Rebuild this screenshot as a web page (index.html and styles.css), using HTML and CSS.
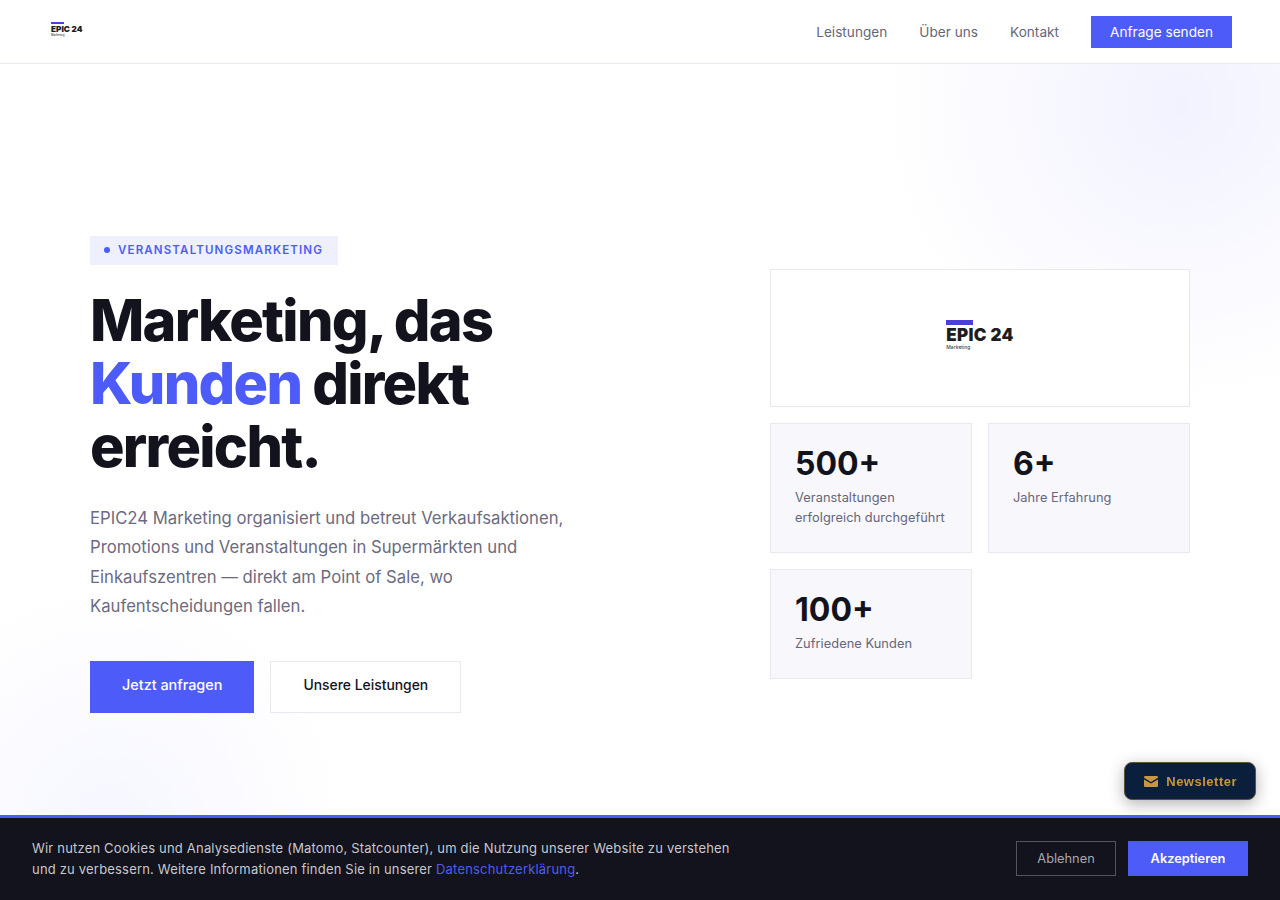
FILE: index.html
```html
<!DOCTYPE html>
<html lang="de">
<head>
    <title>EPIC24 Marketing</title>
    <link rel="stylesheet" href="styles.css">
</head>
<body>
    <header class="site-header">
        <a href="#" class="logo logo-small">
            <span class="logo-bar"></span>
            <span class="logo-name">EPIC 24</span>
            <span class="logo-sub">Marketing</span>
        </a>
        <nav class="main-nav">
            <a href="#">Leistungen</a>
            <a href="#">Über uns</a>
            <a href="#">Kontakt</a>
            <a href="#" class="nav-cta">Anfrage senden</a>
        </nav>
    </header>

    <main class="hero">
        <div class="hero-left">
            <div class="hero-tag"><span class="tag-dot"></span>VERANSTALTUNGSMARKETING</div>
            <h1>Marketing, das <em>Kunden</em> direkt erreicht.</h1>
            <p class="hero-text">EPIC24 Marketing organisiert und betreut Verkaufsaktionen, Promotions und Veranstaltungen in Supermärkten und Einkaufszentren — direkt am Point of Sale, wo Kaufentscheidungen fallen.</p>
            <div class="hero-buttons">
                <a href="#" class="btn btn-primary">Jetzt anfragen</a>
                <a href="#" class="btn btn-outline">Unsere Leistungen</a>
            </div>
        </div>
        <div class="hero-right">
            <div class="logo-card">
                <a href="#" class="logo logo-large">
                    <span class="logo-bar"></span>
                    <span class="logo-name">EPIC 24</span>
                    <span class="logo-sub">Marketing</span>
                </a>
            </div>
            <div class="stat-card">
                <div class="stat-number">500+</div>
                <div class="stat-label">Veranstaltungen erfolgreich durchgeführt</div>
            </div>
            <div class="stat-card">
                <div class="stat-number">6+</div>
                <div class="stat-label">Jahre Erfahrung</div>
            </div>
            <div class="stat-card">
                <div class="stat-number">100+</div>
                <div class="stat-label">Zufriedene Kunden</div>
            </div>
        </div>
    </main>

    <button class="newsletter-btn">
        <svg width="14" height="11" viewBox="0 0 14 11"><path fill="currentColor" d="M1.300 0h11.400C13.400 0 14 .6 14 1.300v.5L7 6 0 1.800v-.5C0 .6.6 0 1.300 0zM0 3.400l7 4.200 7-4.200v6.300c0 .7-.6 1.300-1.300 1.300H1.300C.6 11 0 10.400 0 9.700z"/></svg>
        Newsletter
    </button>

    <div class="cookie-banner">
        <p>Wir nutzen Cookies und Analysedienste (Matomo, Statcounter), um die Nutzung unserer Website zu verstehen und zu verbessern. Weitere Informationen finden Sie in unserer <a href="#">Datenschutzerklärung</a>.</p>
        <div class="cookie-buttons">
            <button class="cookie-decline">Ablehnen</button>
            <button class="cookie-accept">Akzeptieren</button>
        </div>
    </div>
</body>
</html>
```

FILE: styles.css
```css
* {
    box-sizing: border-box;
}

html, body {
    height: 100%;
}

body {
    margin: 0;
    background-color: #fff;
    color: #12131c;
    font-family: Inter, sans-serif;
    overflow: hidden;
}

a {
    text-decoration: none;
}

/* header */
.site-header {
    display: flex;
    justify-content: space-between;
    align-items: center;
    height: 64px;
    padding: 0 48px;
    background-color: #fff;
    border-bottom: 1px solid #e8e8f0;
}

.main-nav {
    display: flex;
    align-items: center;
    gap: 32px;
}

.main-nav a {
    color: #66667a;
    font-size: 13.600px;
    font-weight: 400;
    letter-spacing: 0.020px;
}

.main-nav .nav-cta {
    width: 141px;
    padding: 8px 0;
    background-color: #4d5cf8;
    color: #fff;
    line-height: 16px;
    text-align: center;
}

/* logo */
.logo {
    display: flex;
    flex-direction: column;
    align-items: flex-start;
    color: #1d1d1f;
    font-family: Inter, sans-serif;
}

.logo-bar {
    background-color: #4a3fd8;
}

.logo-name {
    font-weight: 900;
    white-space: nowrap;
}

.logo-sub {
    font-weight: 500;
    white-space: nowrap;
    color: #444;
}

.logo-small {
    margin: -5px 0 0 3px;
}

.logo-small .logo-bar {
    width: 13px;
    height: 2px;
    margin-bottom: 1px;
}

.logo-small .logo-name {
    font-size: 8.200px;
    line-height: 8px;
}

.logo-small .logo-sub {
    font-size: 2.800px;
    line-height: 4px;
}

.logo-large {
    margin-bottom: 6px;
}

.logo-large .logo-bar {
    width: 27px;
    height: 5px;
    margin-bottom: 2px;
}

.logo-large .logo-name {
    font-size: 17px;
    line-height: 17px;
    letter-spacing: 0.300px;
}

.logo-large .logo-sub {
    font-size: 5px;
    line-height: 6px;
}

/* hero */
.hero {
    display: grid;
    grid-template-columns: 1fr 420px;
    gap: 80px;
    align-items: center;
    height: 820px;
    padding: 0 90px;
    background:
        radial-gradient(circle 300px at 1180px 40px, #f2f2ff, rgba(242, 242, 255, 0)),
        radial-gradient(circle 240px at 110px 756px, #f6f7ff, rgba(246, 247, 255, 0));
}

.hero-left {
    margin-top: 1px;
}

.hero-tag {
    display: inline-flex;
    align-items: center;
    gap: 8px;
    height: 29px;
    padding: 0 15px 0 14px;
    background-color: #eef0fd;
    color: #4d5cf8;
    font-size: 11.520px;
    font-weight: 600;
    letter-spacing: 1.150px;
}

.tag-dot {
    width: 6px;
    height: 6px;
    border-radius: 50%;
    background-color: #4d5cf8;
}

h1 {
    margin: 24px 0 25px;
    max-width: 480px;
    font-size: 57.600px;
    font-weight: 800;
    line-height: 1.1;
    letter-spacing: -0.03em;
}

h1 em {
    color: #4d5cf8;
    font-style: normal;
}

.hero-text {
    max-width: 480px;
    margin: 0 0 40px;
    color: #6b6b80;
    font-size: 16.700px;
    line-height: 29.400px;
}

.hero-buttons {
    display: flex;
    gap: 16px;
}

.btn {
    display: block;
    height: 52px;
    padding: 15px 32px;
    font-size: 14.400px;
    font-weight: 500;
    line-height: 17px;
}

.btn-primary {
    background-color: #4d5cf8;
    color: #fff;
}

.btn-outline {
    background-color: #fff;
    border: 1px solid #e8e8f0;
    color: #12131c;
    font-size: 13.900px;
}

.hero-right {
    display: grid;
    grid-template-columns: 1fr 1fr;
    gap: 16px;
}

.logo-card {
    grid-column: 1 / 3;
    display: flex;
    justify-content: center;
    align-items: center;
    height: 138px;
    background-color: #fff;
    border: 1px solid #e8e8f0;
}

.stat-card {
    padding: 24px;
    background-color: #f7f7fc;
    border: 1px solid #e8e8f0;
}

.stat-number {
    margin-bottom: 8px;
    font-size: 32px;
    font-weight: 700;
    line-height: 32px;
}

.stat-label {
    color: #66667a;
    font-size: 12.800px;
    line-height: 20px;
    letter-spacing: 0.060px;
}

/* newsletter + cookies */
.newsletter-btn {
    position: fixed;
    right: 24px;
    bottom: 100px;
    display: flex;
    align-items: center;
    gap: 8px;
    height: 38px;
    padding: 0 18px 0 19px;
    background-color: #0a1f3c;
    border: 1px solid #5c5238;
    border-radius: 8px;
    box-shadow: 0 4px 16px rgba(0, 0, 0, 0.3);
    color: #c8963e;
    font-family: "Liberation Sans", sans-serif;
    font-size: 13px;
    font-weight: 700;
    letter-spacing: 0.5px;
}

.cookie-banner {
    position: fixed;
    left: 0;
    right: 0;
    bottom: 0;
    display: flex;
    justify-content: space-between;
    align-items: center;
    height: 85px;
    padding: 0 32px;
    background-color: #12131c;
    border-top: 3px solid #4d5cf8;
}

.cookie-banner p {
    max-width: 720px;
    margin: 0;
    color: #c8c8d0;
    font-size: 13px;
    line-height: 21px;
    letter-spacing: 0.190px;
}

.cookie-banner a {
    color: #4d5cf8;
}

.cookie-buttons {
    display: flex;
    gap: 12px;
    margin-bottom: 1px;
}

.cookie-buttons button {
    height: 35px;
    font-family: Inter, sans-serif;
    font-size: 12.800px;
}

.cookie-decline {
    width: 100px;
    background: none;
    border: 1px solid #55555f;
    color: #a8a8b2;
}

.cookie-accept {
    width: 120px;
    background-color: #4d5cf8;
    border: 0;
    color: #fff;
    font-size: 12.200px;
    font-weight: 600;
}
```
